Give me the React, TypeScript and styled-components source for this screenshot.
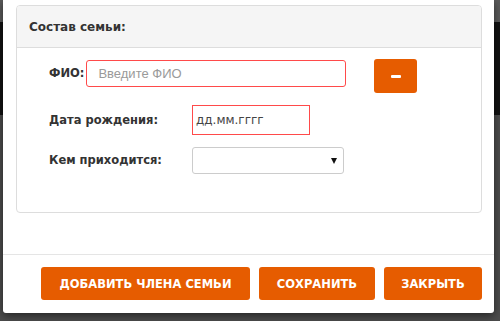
import React from "react";
import styled, { createGlobalStyle } from "styled-components";

const Global = createGlobalStyle`
  html, body { margin: 0; padding: 0; }
  body {
    width: 500px;
    height: 321px;
    overflow: hidden;
    background: linear-gradient(to bottom, #5a5a5a 0, #5a5a5a 22px, #121212 22px, #121212 115px, #4c4c4c 115px);
    font-family: "DejaVu Sans", Verdana, sans-serif;
  }
`;

const Modal = styled.div`
  margin: 0 6px 0 3px;
  width: 491px;
  height: 313px;
  box-sizing: border-box;
  background: #fff;
  border-radius: 0 0 3px 3px;
  box-shadow: 0 3px 8px rgba(0, 0, 0, 0.5);
  display: flex;
  flex-direction: column;
`;

const ModalBody = styled.div`
  padding: 5px 12px 41px 13px;
  border-bottom: 1px solid #e5e5e5;
`;

const Panel = styled.div`
  border: 1px solid #dddddd;
  border-radius: 4px;
  overflow: hidden;
`;

const PanelHeading = styled.div`
  height: 41px;
  background: #f5f5f5;
  border-bottom: 1px solid #dddddd;
  display: flex;
  align-items: center;
  padding-left: 12px;
  font-weight: bold;
  font-size: 12px;
  color: #333;
`;

const PanelBody = styled.div`
  padding: 11px 0 38px 32px;
  display: flex;
  flex-direction: column;
  gap: 12px;
`;

const Row = styled.div<{ $top?: boolean }>`
  display: flex;
  align-items: ${(p) => (p.$top ? "flex-start" : "center")};
  min-height: 27px;
`;

const Label = styled.label<{ $w?: number }>`
  font-weight: bold;
  font-size: 11.5px;
  line-height: 27px;
  color: #333;
  width: ${(p) => (p.$w ? `${p.$w}px` : "auto")};
  flex-shrink: 0;
  margin-top: ${(p) => (p.$w ? "0" : "1px")};
  margin-right: ${(p) => (p.$w ? "0" : "2px")};
`;

const TextInput = styled.input<{ $w: number; $h: number; $r: number }>`
  box-sizing: border-box;
  width: ${(p) => p.$w}px;
  height: ${(p) => p.$h}px;
  margin-top: ${(p) => (p.$r ? 1 : 0)}px;
  border: 1px solid #ff4a4a;
  border-radius: ${(p) => p.$r}px;
  padding: 0 0 0 ${(p) => (p.$r ? 11 : 3)}px;
  font-family: "DejaVu Sans", Verdana, sans-serif;
  font-size: 12px;
  color: #444;
  outline: none;
  background: #fff;
  &::placeholder {
    color: #9a9a9a;
    font-family: "Liberation Sans", Arial, sans-serif;
    font-size: 13px;
  }
`;

const MinusButton = styled.button`
  margin-left: 28px;
  width: 43px;
  height: 34px;
  border: none;
  border-radius: 3px;
  background: #e65c00;
  display: flex;
  align-items: center;
  justify-content: center;
  padding: 0;
  &::before {
    content: "";
    width: 10px;
    height: 3px;
    background: #fff;
    border-radius: 1px;
  }
`;

const SelectWrap = styled.div`
  position: relative;
  width: 152px;
  height: 27px;
`;

const Select = styled.select`
  appearance: none;
  -webkit-appearance: none;
  box-sizing: border-box;
  width: 100%;
  height: 100%;
  border: 1px solid #cccccc;
  border-radius: 3px;
  background: #fff;
  font-family: "DejaVu Sans", Verdana, sans-serif;
  font-size: 12px;
  outline: none;
`;

const Arrow = styled.span`
  position: absolute;
  right: 7px;
  top: 11px;
  width: 0;
  height: 0;
  border-left: 3.5px solid transparent;
  border-right: 3.5px solid transparent;
  border-top: 6px solid #111;
  pointer-events: none;
`;

const Footer = styled.div`
  display: flex;
  justify-content: flex-end;
  gap: 9px;
  padding: 12px 12px 12px 0;
`;

const Button = styled.button<{ $w: number }>`
  width: ${(p) => p.$w}px;
  height: 33px;
  border: none;
  border-radius: 3px;
  background: #e65c00;
  color: #fff;
  font-family: "DejaVu Sans", Verdana, sans-serif;
  font-weight: bold;
  font-size: 11.5px;
  text-transform: uppercase;
  padding: 0;
`;

export default function App() {
  return (
    <>
      <Global />
      <Modal>
        <ModalBody>
          <Panel>
            <PanelHeading>Состав семьи:</PanelHeading>
            <PanelBody>
              <Row $top>
                <Label>ФИО:</Label>
                <TextInput $w={260} $h={27} $r={3} placeholder="Введите ФИО" />
                <MinusButton aria-label="Удалить" />
              </Row>
              <Row>
                <Label $w={143}>Дата рождения:</Label>
                <TextInput $w={118} $h={30} $r={0} defaultValue="дд.мм.гггг" />
              </Row>
              <Row>
                <Label $w={143}>Кем приходится:</Label>
                <SelectWrap>
                  <Select defaultValue="">
                    <option value=""></option>
                  </Select>
                  <Arrow />
                </SelectWrap>
              </Row>
            </PanelBody>
          </Panel>
        </ModalBody>
        <Footer>
          <Button $w={209}>Добавить члена семьи</Button>
          <Button $w={116}>Сохранить</Button>
          <Button $w={98}>Закрыть</Button>
        </Footer>
      </Modal>
    </>
  );
}
